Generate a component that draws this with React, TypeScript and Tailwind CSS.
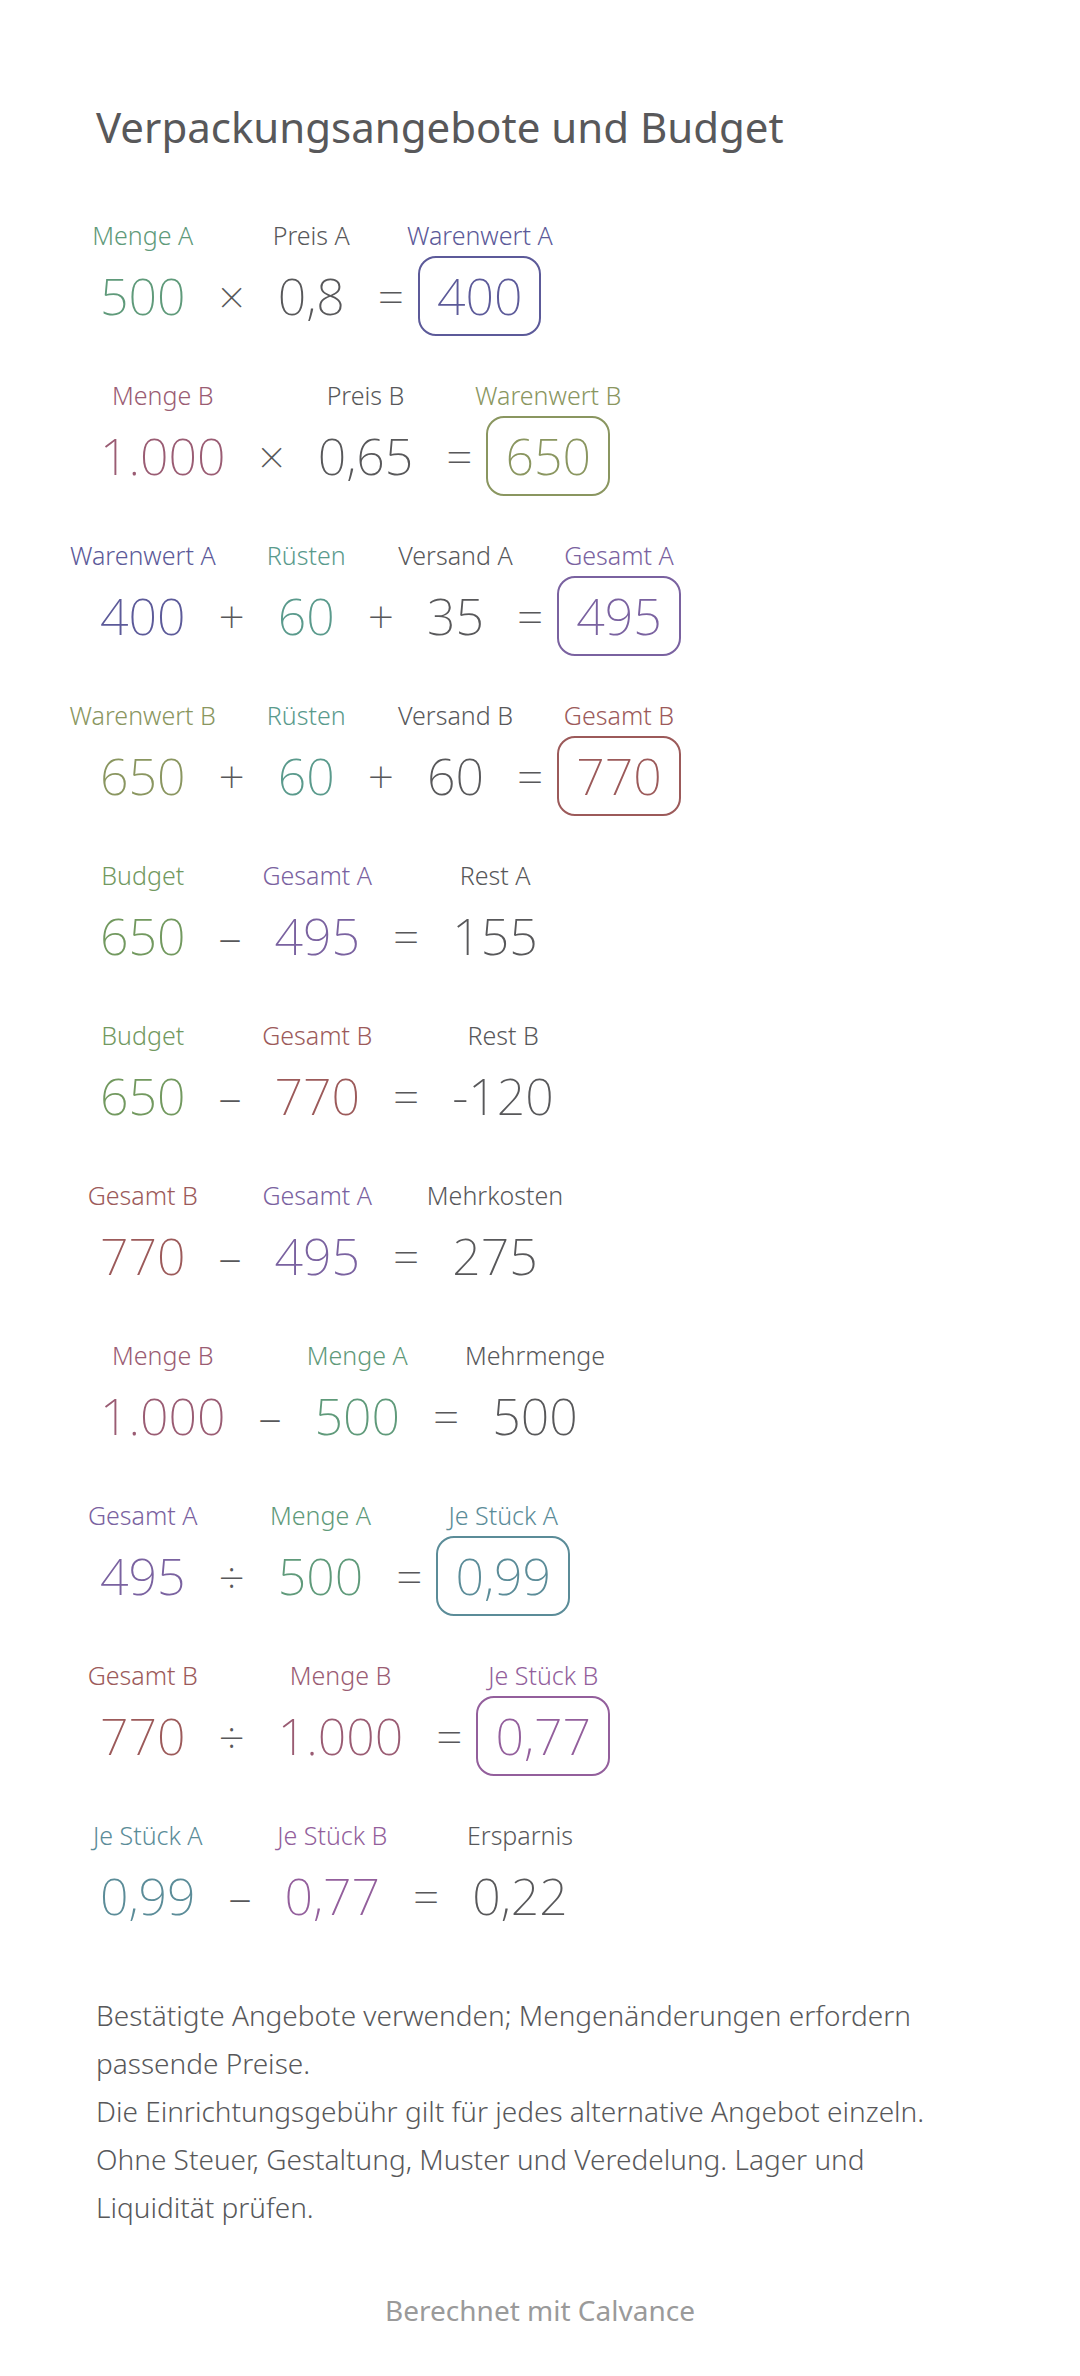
import React from "react"

type Term = { label: string; value: string; tone: string; boxed?: boolean }
type Item = Term | string

const tones = {
  gray: "text-[#58585a] border-[#58585a]",
  mengeA: "text-[#5f9a7a] border-[#5f9a7a]",
  mengeB: "text-[#9a5c73] border-[#9a5c73]",
  wertA: "text-[#5c5a99] border-[#5c5a99]",
  wertB: "text-[#8a9660] border-[#8a9660]",
  ruesten: "text-[#5a9a8c] border-[#5a9a8c]",
  gesamtA: "text-[#7a62a0] border-[#7a62a0]",
  gesamtB: "text-[#9c5a5a] border-[#9c5a5a]",
  budget: "text-[#72995f] border-[#72995f]",
  stueckA: "text-[#5b8c98] border-[#5b8c98]",
  stueckB: "text-[#935f9c] border-[#935f9c]",
}

const rows: Item[][] = [
  [
    { label: "Menge A", value: "500", tone: tones.mengeA },
    "×",
    { label: "Preis A", value: "0,8", tone: tones.gray },
    "=",
    { label: "Warenwert A", value: "400", tone: tones.wertA, boxed: true },
  ],
  [
    { label: "Menge B", value: "1.000", tone: tones.mengeB },
    "×",
    { label: "Preis B", value: "0,65", tone: tones.gray },
    "=",
    { label: "Warenwert B", value: "650", tone: tones.wertB, boxed: true },
  ],
  [
    { label: "Warenwert A", value: "400", tone: tones.wertA },
    "+",
    { label: "Rüsten", value: "60", tone: tones.ruesten },
    "+",
    { label: "Versand A", value: "35", tone: tones.gray },
    "=",
    { label: "Gesamt A", value: "495", tone: tones.gesamtA, boxed: true },
  ],
  [
    { label: "Warenwert B", value: "650", tone: tones.wertB },
    "+",
    { label: "Rüsten", value: "60", tone: tones.ruesten },
    "+",
    { label: "Versand B", value: "60", tone: tones.gray },
    "=",
    { label: "Gesamt B", value: "770", tone: tones.gesamtB, boxed: true },
  ],
  [
    { label: "Budget", value: "650", tone: tones.budget },
    "–",
    { label: "Gesamt A", value: "495", tone: tones.gesamtA },
    "=",
    { label: "Rest A", value: "155", tone: tones.gray },
  ],
  [
    { label: "Budget", value: "650", tone: tones.budget },
    "–",
    { label: "Gesamt B", value: "770", tone: tones.gesamtB },
    "=",
    { label: "Rest B", value: "-120", tone: tones.gray },
  ],
  [
    { label: "Gesamt B", value: "770", tone: tones.gesamtB },
    "–",
    { label: "Gesamt A", value: "495", tone: tones.gesamtA },
    "=",
    { label: "Mehrkosten", value: "275", tone: tones.gray },
  ],
  [
    { label: "Menge B", value: "1.000", tone: tones.mengeB },
    "–",
    { label: "Menge A", value: "500", tone: tones.mengeA },
    "=",
    { label: "Mehrmenge", value: "500", tone: tones.gray },
  ],
  [
    { label: "Gesamt A", value: "495", tone: tones.gesamtA },
    "÷",
    { label: "Menge A", value: "500", tone: tones.mengeA },
    "=",
    { label: "Je Stück A", value: "0,99", tone: tones.stueckA, boxed: true },
  ],
  [
    { label: "Gesamt B", value: "770", tone: tones.gesamtB },
    "÷",
    { label: "Menge B", value: "1.000", tone: tones.mengeB },
    "=",
    { label: "Je Stück B", value: "0,77", tone: tones.stueckB, boxed: true },
  ],
  [
    { label: "Je Stück A", value: "0,99", tone: tones.stueckA },
    "–",
    { label: "Je Stück B", value: "0,77", tone: tones.stueckB },
    "=",
    { label: "Ersparnis", value: "0,22", tone: tones.gray },
  ],
]

function TermColumn({ term }: { term: Term }) {
  return (
    <div className={`flex flex-col items-center ${term.tone}`}>
      {/* zero-width wrapper lets wide labels overhang the value evenly */}
      <div className="flex w-0 justify-center">
        <span className="whitespace-nowrap text-[25px] font-light leading-[34px]">{term.label}</span>
      </div>
      <div
        className={`mt-1 flex h-[80px] items-center rounded-[18px] border-2 px-[17px] text-[50px] font-extralight leading-none ${
          term.boxed ? "" : "border-transparent"
        }`}
      >
        {term.value}
      </div>
    </div>
  )
}

export default function App() {
  return (
    <div
      className="min-h-screen bg-white px-[96px] pt-[100px] pb-[46px]"
      style={{ fontFamily: '"Noto Sans", "Open Sans", sans-serif' }}
    >
      <h1 className="text-[42px] font-normal leading-[53px] text-[#58585a]">Verpackungsangebote und Budget</h1>

      <div className="mt-[65px] -ml-[15px] flex flex-col gap-[42px]">
        {rows.map((row, i) => (
          <div key={i} className="flex items-end gap-[14px]">
            {row.map((item, j) =>
              typeof item === "string" ? (
                <div
                  key={j}
                  className="flex h-[80px] items-center text-[46px] font-extralight leading-none text-[#58585a]"
                >
                  {item}
                </div>
              ) : (
                <TermColumn key={j} term={item} />
              )
            )}
          </div>
        ))}
      </div>

      <div className="mt-[55px] text-[28px] font-light leading-[48px] text-[#58585a]">
        <p>Bestätigte Angebote verwenden; Mengenänderungen erfordern passende Preise.</p>
        <p>Die Einrichtungsgebühr gilt für jedes alternative Angebot einzeln.</p>
        <p>Ohne Steuer, Gestaltung, Muster und Veredelung. Lager und Liquidität prüfen.</p>
      </div>

      <p className="mt-[59px] text-center text-[28px] leading-[40px] text-[#9a9a9a]">Berechnet mit Calvance</p>
    </div>
  )
}
